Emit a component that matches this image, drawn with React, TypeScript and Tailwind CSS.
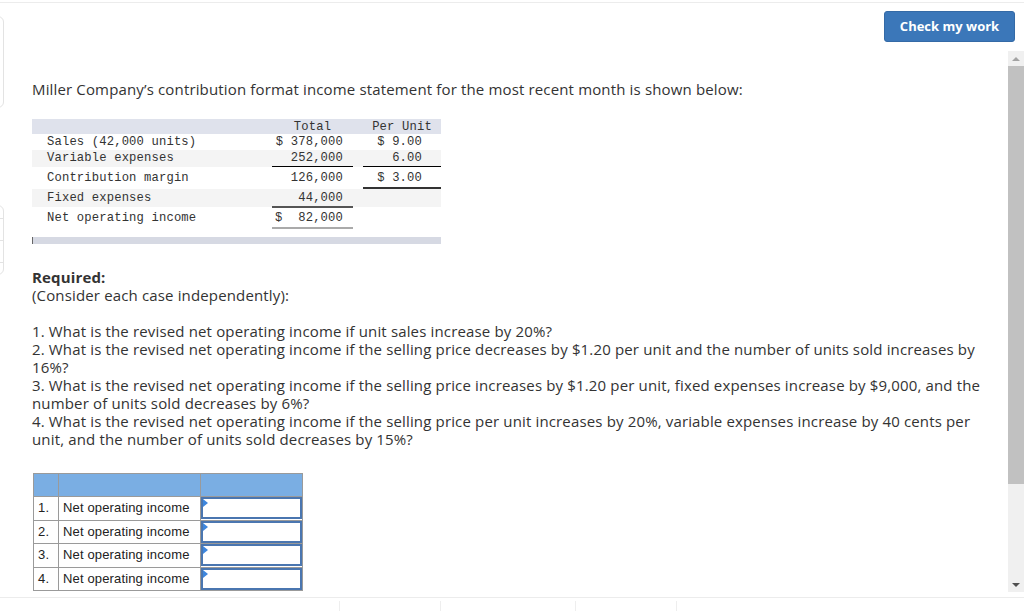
const prose = { fontFamily: '"Open Sans", "Liberation Sans", sans-serif' };
const mono = { fontFamily: '"Liberation Mono", "DejaVu Sans Mono", monospace' };
const arial = { fontFamily: '"Liberation Sans", Arial, sans-serif' };

const questions = [
  '1. What is the revised net operating income if unit sales increase by 20%?',
  '2. What is the revised net operating income if the selling price decreases by $1.20 per unit and the number of units sold increases by 16%?',
  '3. What is the revised net operating income if the selling price increases by $1.20 per unit, fixed expenses increase by $9,000, and the number of units sold decreases by 6%?',
  '4. What is the revised net operating income if the selling price per unit increases by 20%, variable expenses increase by 40 cents per unit, and the number of units sold decreases by 15%?',
];

const row = 'grid grid-cols-[240px_81px_10px_78px]';

function IncomeStatement() {
  return (
    <div className="w-[409px] text-[12.2px] leading-[15px] text-[#333]" style={mono}>
      <div className={`${row} bg-[#dfe2ec] h-[15px] pt-[1px]`}>
        <div />
        <div className="text-center">Total</div>
        <div />
        <div className="text-center">Per Unit</div>
      </div>
      <div className={`${row} h-[16px] pt-[1px]`}>
        <div className="pl-[15px]">Sales (42,000 units)</div>
        <div className="text-right pr-[10px]">$ 378,000</div>
        <div />
        <div className="text-right pr-[19px]">$ 9.00</div>
      </div>
      <div className={`${row} h-[17px] bg-[#f4f4f4]`}>
        <div className="pl-[15px] pt-[1px]">Variable expenses</div>
        <div className="text-right pr-[10px] pt-[1px] border-b border-black">252,000</div>
        <div />
        <div className="text-right pr-[19px] pt-[1px] border-b border-black">6.00</div>
      </div>
      <div className={`${row} h-[22px]`}>
        <div className="pl-[15px] pt-[4px]">Contribution margin</div>
        <div className="text-right pr-[10px] pt-[4px]">126,000</div>
        <div />
        <div className="text-right pr-[19px] pt-[4px] border-b-2 border-[#333]">$ 3.00</div>
      </div>
      <div className={`${row} h-[18px] bg-[#f4f4f4]`}>
        <div className="pl-[15px] pt-[2px]">Fixed expenses</div>
        <div className="text-right pr-[10px] pt-[2px] border-b-2 border-[#555]">44,000</div>
        <div />
        <div />
      </div>
      <div className={`${row} h-[22px]`}>
        <div className="pl-[15px] pt-[4px]">Net operating income</div>
        <div className="flex justify-between pl-[3px] pr-[10px] pt-[4px] border-b-2 border-[#aaa]">
          <span>$</span>
          <span>82,000</span>
        </div>
        <div />
        <div />
      </div>
      <div className="mt-[8px] h-[7px] bg-[#d6d9e3] border-l border-[#666]" />
    </div>
  );
}

function AnswerTable() {
  return (
    <table className="border-collapse text-[13px] text-[#222]" style={arial}>
      <tbody>
        <tr className="h-[23px] bg-[#7aaee3]">
          <td className="w-[25px] border border-[#9a9a9a]" />
          <td className="w-[142px] border border-[#9a9a9a]" />
          <td className="w-[102px] border border-[#9a9a9a]" />
        </tr>
        {[1, 2, 3, 4].map((n) => (
          <tr key={n} className="h-[23.5px]">
            <td className="border border-[#9a9a9a] pl-[4px]">{n}.</td>
            <td className="border border-[#9a9a9a] pl-[4px]">Net operating income</td>
            <td className="border border-[#9a9a9a] p-0">
              <div className="relative h-[22px] border-2 border-[#4a76b0] bg-white">
                <span className="absolute left-0 top-0 w-0 h-0 border-t-[4px] border-b-[4px] border-l-[5px] border-t-transparent border-b-transparent border-l-[#3d86dd]" />
              </div>
            </td>
          </tr>
        ))}
      </tbody>
    </table>
  );
}

export default function App() {
  return (
    <div className="relative w-[1024px] h-[611px] overflow-hidden bg-white flex flex-col" style={prose}>
      <div className="h-[3px] border-b border-[#ececec]" />

      {/* side panels peeking in from the left */}
      <div className="absolute left-[-200px] top-[16px] w-[204px] h-[92px] rounded-[6px] border border-[#e3e3e3]" />
      <div className="absolute left-[-200px] top-[205px] w-[204px] h-[70px] rounded-[6px] border border-[#e3e3e3] flex flex-col">
        <div className="h-[13px] border-b border-[#e3e3e3]" />
        <div className="h-[22px] border-b border-[#e3e3e3]" />
        <div className="h-[22px] border-b border-[#e3e3e3]" />
      </div>

      <div className="flex justify-end pt-[8px] pr-[9px] h-[48px]">
        <button className="w-[131px] h-[31px] rounded-[3px] bg-[#3b77b9] text-white text-[13px] font-bold border border-[#346aa6]">
          Check my work
        </button>
      </div>

      <div className="flex h-[541px]">
        <div className="flex-1 pl-[32px] pr-[14px] text-[#333] text-[15px] leading-[18px] tracking-[0.15px]">
          <p className="mt-[29px]">
            Miller Company’s contribution format income statement for the most recent month is shown below:
          </p>
          <div className="mt-[21px]">
            <IncomeStatement />
          </div>
          <p className="mt-[24px] font-bold">Required:</p>
          <p>(Consider each case independently):</p>
          <div className="mt-[18px]">
            {questions.map((q) => (
              <p key={q}>{q}</p>
            ))}
          </div>
          <div className="mt-[25px] pl-[1px]">
            <AnswerTable />
          </div>
        </div>
        <div className="w-[16px] bg-[#f0f0f0] flex flex-col items-center">
          <div className="h-[15px] flex items-center justify-center">
            <span className="w-0 h-0 border-l-[4px] border-r-[4px] border-b-[4px] border-l-transparent border-r-transparent border-b-[#a3a3a3]" />
          </div>
          <div className="w-[16px] h-[418px] bg-[#c1c1c1]" />
          <div className="flex-1" />
          <div className="h-[15px] flex items-center justify-center">
            <span className="w-0 h-0 border-l-[4px] border-r-[4px] border-t-[4px] border-l-transparent border-r-transparent border-t-[#505050]" />
          </div>
        </div>
      </div>

      <div className="h-[5px]" />
      <div className="flex-1 border-t border-[#ececec] flex pt-[3px]">
        <div className="w-[339px]" />
        <div className="w-[101px] border-l border-[#eeeeee]" />
        <div className="w-[135px] border-l border-[#eeeeee]" />
        <div className="w-[101px] border-l border-[#eeeeee]" />
        <div className="border-l border-[#eeeeee]" />
      </div>
    </div>
  );
}
